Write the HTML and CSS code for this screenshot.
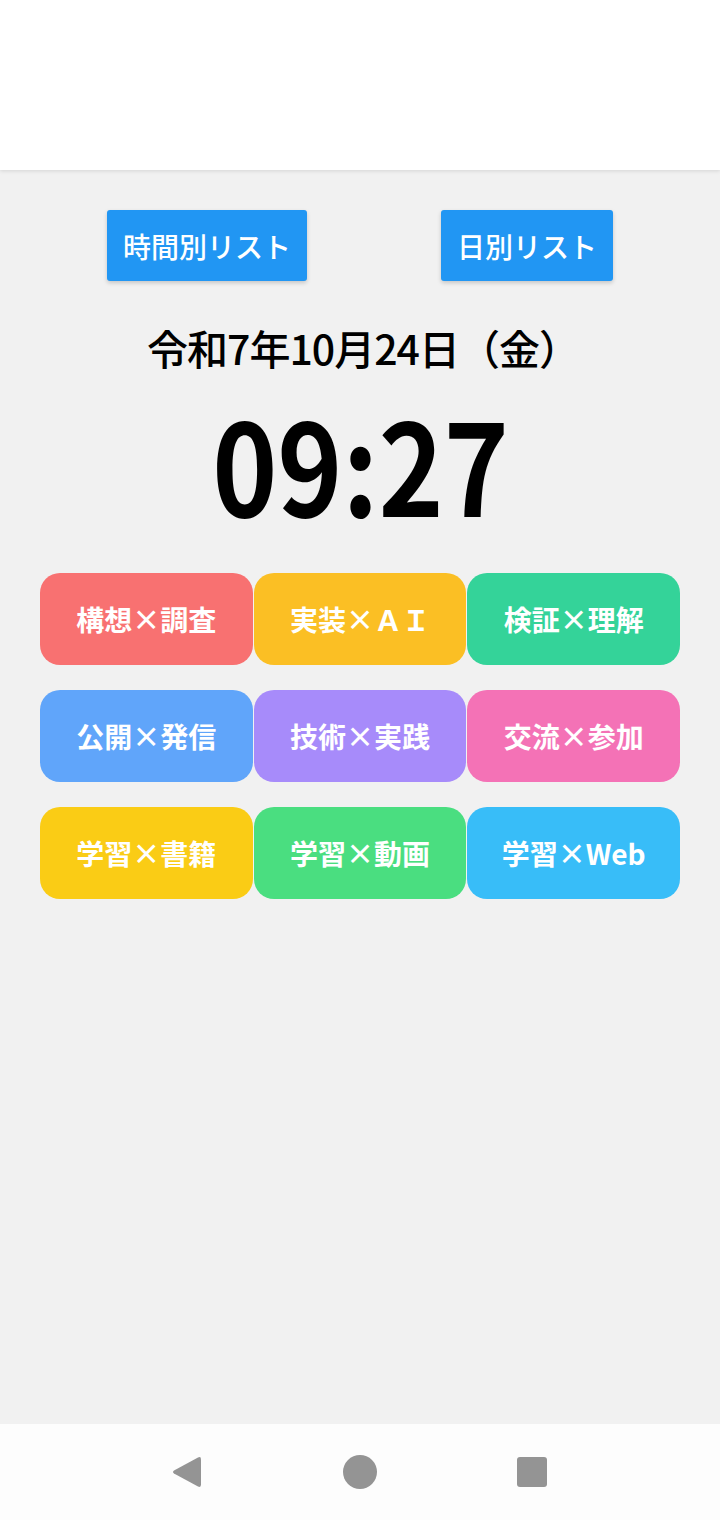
FILE: index.html
```html
<!DOCTYPE html>
<html lang="ja">
<head>
<meta charset="utf-8">
<title>Clock</title>
<link rel="stylesheet" href="styles.css">
</head>
<body>
<div class="screen">
  <header class="topbar"></header>
  <main class="content">
    <div class="list-buttons">
      <button class="list-btn">時間別リスト</button>
      <button class="list-btn">日別リスト</button>
    </div>
    <div class="date">令和7年10月24日（金）</div>
    <div class="time">09:27</div>
    <div class="tiles">
      <div class="tile red">構想×調査</div>
      <div class="tile amber">実装×ＡＩ</div>
      <div class="tile emerald">検証×理解</div>
      <div class="tile blue">公開×発信</div>
      <div class="tile violet">技術×実践</div>
      <div class="tile pink">交流×参加</div>
      <div class="tile yellow">学習×書籍</div>
      <div class="tile green">学習×動画</div>
      <div class="tile sky">学習×Web</div>
    </div>
  </main>
  <nav class="navbar">
    <svg class="nav-icon" width="32" height="34" viewBox="0 0 32 34"><path d="M27 2.5 Q30 1 30 4.5 L30 29.5 Q30 33 27 31.5 L3 18.5 Q1 17 3 15.5 Z" fill="#949494"/></svg>
    <span class="nav-home"></span>
    <span class="nav-recent"></span>
  </nav>
</div>
</body>
</html>
```
FILE: styles.css
```css
* { box-sizing: border-box; }
html, body { margin: 0; padding: 0; }
body {
  font-family: "Noto Sans CJK JP", "Noto Sans", sans-serif;
  background: #f1f1f1;
}
.screen {
  width: 720px;
  height: 1520px;
  display: flex;
  flex-direction: column;
  background: #f1f1f1;
}
.topbar {
  height: 170px;
  flex: none;
  background: #ffffff;
  box-shadow: 0 1px 4px rgba(0,0,0,0.12);
  position: relative;
  z-index: 1;
}
.content {
  flex: 1;
  display: flex;
  flex-direction: column;
  align-items: center;
  padding-top: 40px;
}
.list-buttons {
  display: flex;
  gap: 134px;
  justify-content: center;
}
.list-btn {
  height: 71px;
  padding: 0 16px;
  border: none;
  border-radius: 3px;
  background: #2196f3;
  color: #ffffff;
  font-family: "Noto Sans CJK JP", sans-serif;
  font-size: 28px;
  font-weight: 500;
  box-shadow: 0 2px 4px rgba(0,0,0,0.18);
}
.date {
  margin-top: 42px;
  font-size: 41px;
  line-height: 48px;
  font-weight: 500;
  letter-spacing: -1px;
  color: #000;
  padding-left: 6px;
}
.time {
  margin-top: 26px;
  font-size: 127px;
  line-height: 130px;
  font-weight: 700;
  color: #000;
  transform: scaleX(0.87);
}
.tiles {
  margin-top: 46px;
  width: 640px;
  display: grid;
  grid-template-columns: repeat(3, 1fr);
  column-gap: 1px;
  row-gap: 25px;
}
.tile {
  height: 92px;
  border-radius: 20px;
  display: flex;
  align-items: center;
  justify-content: center;
  color: #ffffff;
  font-size: 28px;
  font-weight: 700;
}
.red { background: #f87171; }
.amber { background: #fbbf24; }
.emerald { background: #34d399; }
.blue { background: #60a5fa; }
.violet { background: #a78bfa; }
.pink { background: #f472b6; }
.yellow { background: #facc15; }
.green { background: #4ade80; }
.sky { background: #38bdf8; }
.navbar {
  height: 96px;
  flex: none;
  background: #fdfdfd;
  display: flex;
  align-items: center;
  justify-content: center;
  gap: 140px;
  padding-right: 2px;
}
.nav-icon { display: block; }
.nav-home {
  width: 34px;
  height: 34px;
  border-radius: 50%;
  background: #949494;
}
.nav-recent {
  width: 30px;
  height: 30px;
  border-radius: 3px;
  background: #949494;
}
```
